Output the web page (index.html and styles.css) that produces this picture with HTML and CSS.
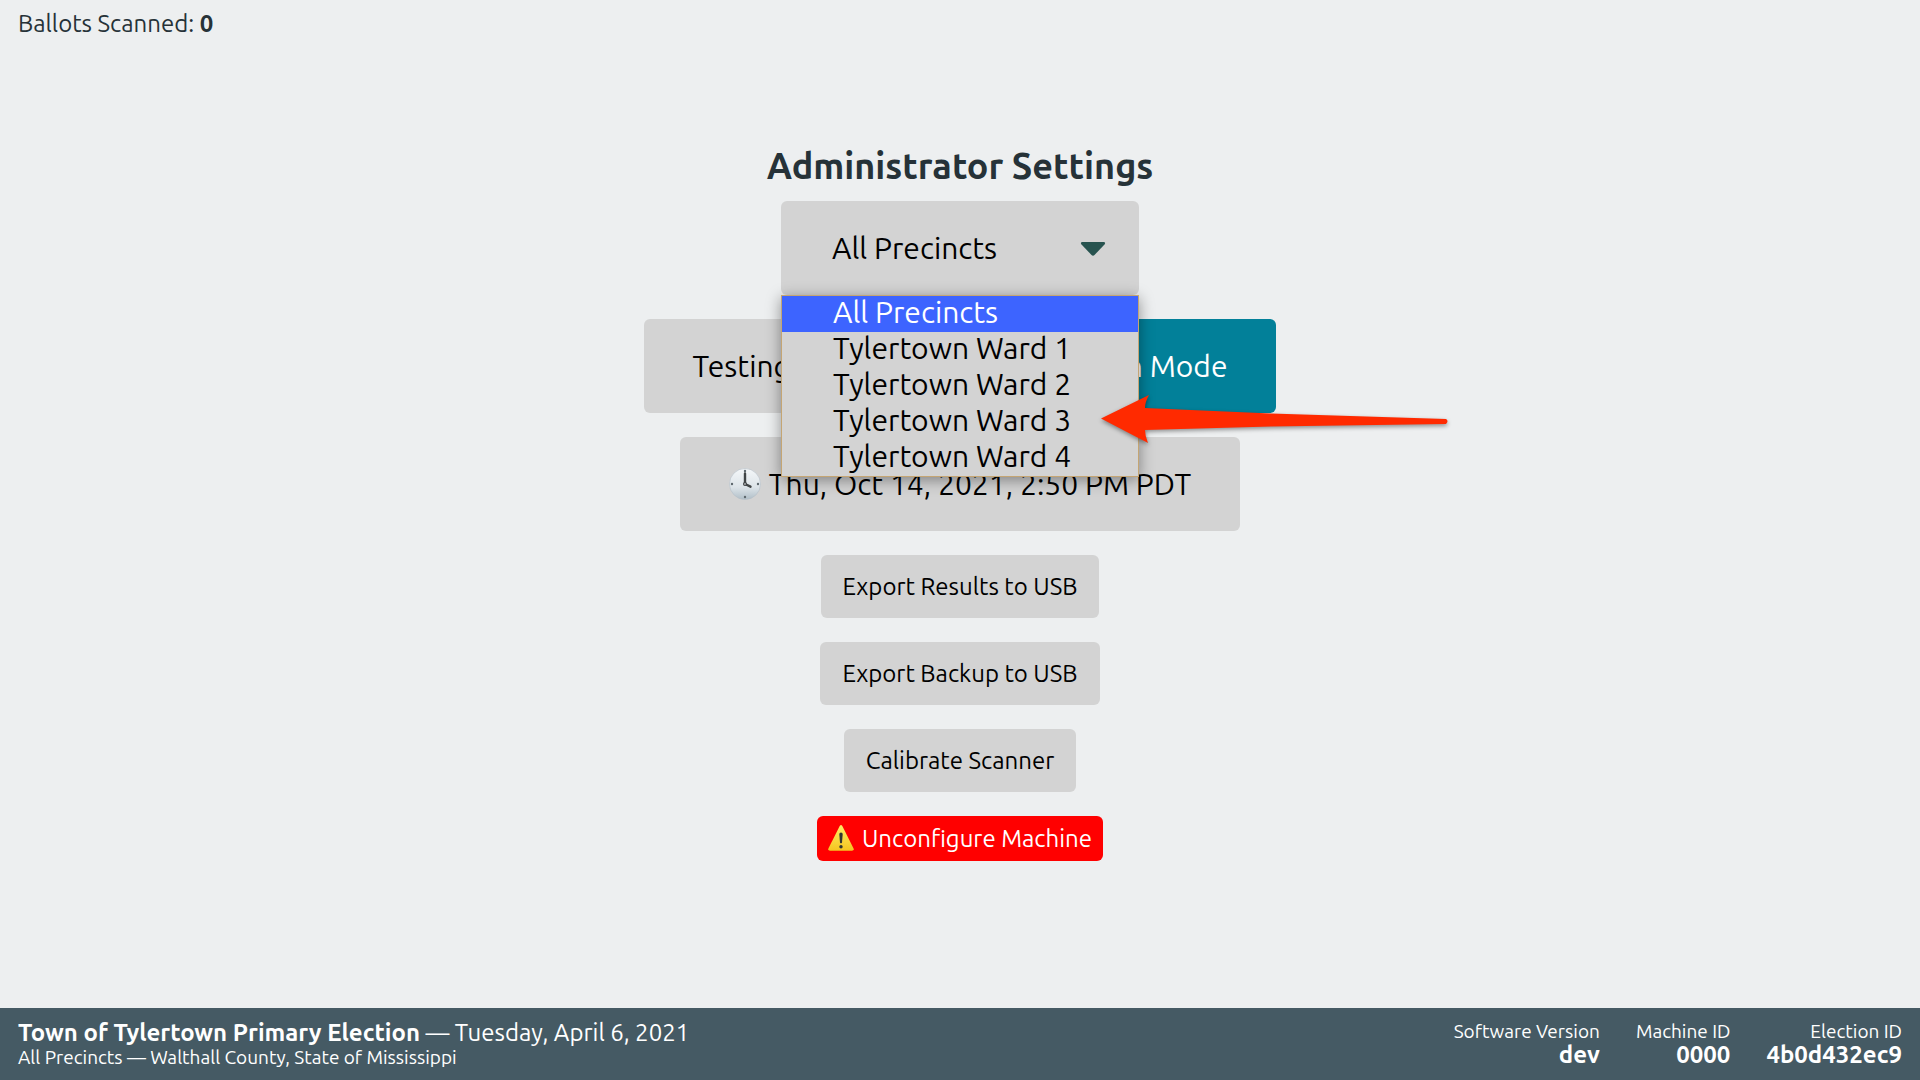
FILE: index.html
```
<!DOCTYPE html>
<html lang="en">
<head>
<meta charset="utf-8">
<meta name="viewport" content="width=device-width, initial-scale=1">
<title>Administrator Settings</title>
<link rel="stylesheet" href="styles.css">
</head>
<body>
<div class="screen">
  <p class="ballot-count">Ballots Scanned: <strong>0</strong></p>
  <main class="settings">
    <h1 class="title">Administrator Settings</h1>

    <div class="precinct">
      <select class="precinct-select" aria-label="Precinct">
        <option selected>All Precincts</option>
        <option>Tylertown Ward 1</option>
        <option>Tylertown Ward 2</option>
        <option>Tylertown Ward 3</option>
        <option>Tylertown Ward 4</option>
      </select>
      <svg class="caret" viewBox="0 0 26 14" aria-hidden="true"><path d="M2 0H24Q26 .5 24.500 2.500L14.500 13Q13 14.500 11.500 13L1.500 2.500Q0 .5 2 0Z" fill="#27534f"/></svg>
      <ul class="precinct-menu" role="listbox" aria-label="Precinct options">
        <li class="option option-active" role="option" aria-selected="true">All Precincts</li>
        <li class="option" role="option">Tylertown Ward 1</li>
        <li class="option" role="option">Tylertown Ward 2</li>
        <li class="option" role="option">Tylertown Ward 3</li>
        <li class="option" role="option">Tylertown Ward 4</li>
      </ul>
      <svg class="arrow" viewBox="0 0 348 50" aria-hidden="true"><path d="M0 23.500L48 0Q44 7 44 13L170 18.500L345 24Q348 26 345 29L170 31.500L44 35Q44 41 47 48Z" fill="#ff2a00"/></svg>
    </div>

    <div class="mode">
      <button class="button large mode-test" type="button">Testing Mode</button>
      <button class="button large mode-live" type="button">Live Election Mode</button>
    </div>

    <button class="button large clock-button" type="button">
      <svg class="clock-icon" viewBox="0 0 32 32" aria-hidden="true">
        <defs><linearGradient id="face" x1="0" y1="0" x2="0" y2="1"><stop offset="0" stop-color="#f4f7f9"/><stop offset=".6" stop-color="#dde4e9"/><stop offset="1" stop-color="#b1bfc8"/></linearGradient></defs>
        <circle cx="16" cy="16" r="15.500" fill="url(#face)" stroke="#b5c0c7" stroke-width=".6"/>
        <g fill="#5e686e"><circle cx="16" cy="3" r="1.200"/><circle cx="29" cy="16" r="1.200"/><circle cx="16" cy="29" r="1.200"/><circle cx="3" cy="16" r="1.200"/></g>
        <path d="M16 5.500V16L21.500 18.700" fill="none" stroke="#414547" stroke-width="2.400" stroke-linecap="round" stroke-linejoin="round"/>
        <circle cx="16" cy="16" r="2" fill="#414547"/><circle cx="16" cy="16" r=".8" fill="#e8edf0"/>
      </svg>
      <span>Thu, Oct 14, 2021, 2:50 PM PDT</span>
    </button>

    <button class="button" type="button">Export Results to USB</button>
    <button class="button" type="button">Export Backup to USB</button>
    <button class="button" type="button">Calibrate Scanner</button>
    <button class="button danger" type="button">
      <svg class="warning-icon" viewBox="0 0 26 26" aria-hidden="true">
        <defs><linearGradient id="sign" x1="0" y1="0" x2="0" y2="1"><stop offset="0" stop-color="#ffed65"/><stop offset="1" stop-color="#f5c51f"/></linearGradient></defs>
        <path d="M11.700 1Q13 -.8 14.300 1L25.600 23.500Q26.200 25.700 24 25.800H2Q-.2 25.700 .4 23.500Z" fill="url(#sign)"/>
        <path d="M11.300 9Q11.300 7.500 13 7.500T14.700 9L14 17.700Q13 18.800 12 17.700Z" fill="#333532"/>
        <circle cx="13" cy="21.700" r="1.700" fill="#333532"/>
      </svg>
      <span>Unconfigure Machine</span>
    </button>
  </main>

  <footer class="status">
    <div class="election">
      <div class="primary"><strong>Town of Tylertown Primary Election</strong> — Tuesday, April 6, 2021</div>
      <div class="secondary">All Precincts — Walthall County, State of Mississippi</div>
    </div>
    <dl class="facts">
      <div class="fact"><dt class="secondary">Software Version</dt><dd class="primary value">dev</dd></div>
      <div class="fact"><dt class="secondary">Machine ID</dt><dd class="primary value">0000</dd></div>
      <div class="fact"><dt class="secondary">Election ID</dt><dd class="primary value">4b0d432ec9</dd></div>
    </dl>
  </footer>
</div>
</body>
</html>
```
FILE: styles.css
```
* {
  box-sizing: border-box;
}

body {
  margin: 0;
  background: #edeff0;
  color: #263238;
  font-family: Ubuntu, "Noto Sans", sans-serif;
  font-size: 24px;
  line-height: 27px;
}

.screen {
  display: flex;
  flex-direction: column;
  min-height: 100vh;
}

/* Sits in the corner, over the centred settings column */
.ballot-count {
  position: absolute;
  top: 10px;
  left: 18px;
  margin: 0;
}

.settings {
  flex: 1;
  display: flex;
  flex-direction: column;
  align-items: center;
  justify-content: center;
  gap: 24px;
  padding-bottom: 2px;
}

.title {
  margin: 0 0 -9px;
  font-size: 36px;
  font-weight: 700;
  line-height: 40px;
}

.button {
  padding: 18px 22px;
  border: 0;
  border-radius: 6px;
  background: #d3d3d3;
  color: #000;
  font: inherit;
}

.large,
.precinct-select {
  font-size: 30px;
  line-height: 36px;
}

.large {
  padding: 29px 49px;
}

.precinct {
  position: relative;
}

.precinct-select {
  display: block;
  width: 358px;
  height: 94px;
  padding: 0 51px;
  appearance: none;
  border: 0;
  border-radius: 6px;
  background: #d3d3d3;
  color: #000;
  font-family: inherit;
}

.caret {
  position: absolute;
  top: 41px;
  right: 33px;
  width: 26px;
  height: 14px;
  pointer-events: none;
}

.precinct-menu {
  position: absolute;
  z-index: 1;
  top: 94px;
  left: 0;
  width: 100%;
  margin: 0;
  padding: 0;
  border: 1px solid #c4a573;
  background: #d3d3d3;
  box-shadow: 0 3px 14px rgba(0, 0, 0, 0.4);
  color: #000;
  list-style: none;
}

.option {
  padding: 0 51px 3px;
  font-size: 30px;
  line-height: 33px;
}

.option-active {
  background: #3d64ff;
  color: #fff;
}

.arrow {
  position: absolute;
  z-index: 2;
  top: 194px;
  left: 320px;
  width: 348px;
  height: 50px;
  overflow: visible;
  filter: drop-shadow(0 2px 2px rgba(0, 0, 0, 0.4));
  pointer-events: none;
}

.mode {
  display: flex;
}

.mode-test {
  border-radius: 6px 0 0 6px;
}

.mode-live {
  border-radius: 0 6px 6px 0;
  background: #028099;
  color: #fff;
}

.clock-button,
.danger {
  display: flex;
  align-items: center;
  gap: 8px;
}

.clock-icon {
  width: 32px;
  height: 32px;
}

.danger {
  padding: 9px 11px;
  background: #f00;
  color: #fff;
}

.warning-icon {
  width: 26px;
  height: 26px;
}

.status {
  display: flex;
  align-items: center;
  justify-content: space-between;
  min-height: 72px;
  padding: 0 18px;
  background: #455a64;
  color: #fff;
}

.primary {
  font-size: 24px;
  line-height: 26px;
}

.secondary {
  font-size: 19px;
  line-height: 22px;
}

.facts {
  display: flex;
  gap: 36px;
  margin: 0;
  text-align: right;
}

.value {
  margin: 0;
  font-weight: 700;
}
```
